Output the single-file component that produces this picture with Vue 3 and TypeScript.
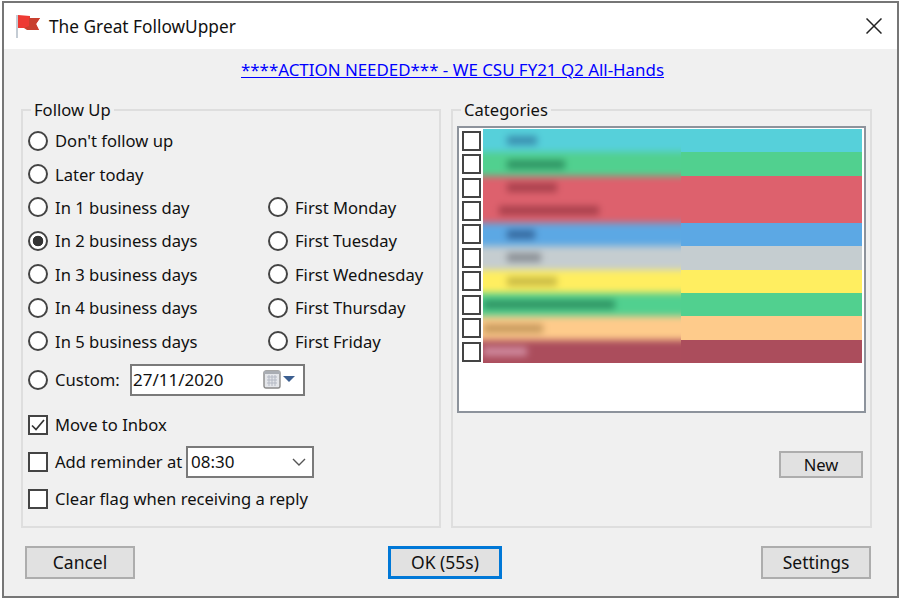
<script setup lang="ts">
interface Category {
  color: string;
  smudge: string;
  start: number;
  width: number;
}

const leftOptions = [
  "In 1 business day",
  "In 2 business days",
  "In 3 business days",
  "In 4 business days",
  "In 5 business days",
];
const rightOptions = [
  "First Monday",
  "First Tuesday",
  "First Wednesday",
  "First Thursday",
  "First Friday",
];
const selected = "In 2 business days";

// the names are blurred out in the screenshot, so only the smudges are kept
const categories: Category[] = [
  { color: "#56d0da", smudge: "#3a8fb0", start: 32, width: 30 },
  { color: "#51d08f", smudge: "#2f9463", start: 32, width: 58 },
  { color: "#dd616d", smudge: "#a8404c", start: 32, width: 50 },
  { color: "#dd616d", smudge: "#a8404c", start: 24, width: 100 },
  { color: "#5ca8e4", smudge: "#36699f", start: 32, width: 28 },
  { color: "#c5cdd0", smudge: "#8a8f95", start: 32, width: 34 },
  { color: "#ffee60", smudge: "#c9bb45", start: 32, width: 50 },
  { color: "#51d08f", smudge: "#2f9463", start: 8, width: 132 },
  { color: "#fecb8b", smudge: "#c79a5e", start: 8, width: 60 },
  { color: "#ab4d5c", smudge: "#cf8a9e", start: 8, width: 44 },
];
</script>

<template>
  <div class="page">
    <div class="window">
      <header class="titlebar">
        <svg class="flag" width="26" height="26" viewBox="0 0 26 26">
          <rect x="1" y="2" width="2" height="23" fill="#c4ccd4" />
          <path d="M3 2 L15 3 L15 5 L25 5 L21 11 L24 17 L12 17 L12 15 L3 15 Z" fill="#ee3a33" />
          <path d="M14 5 L25 5 L21 11 L24 17 L12 17 L9 15 L14 13 Z" fill="#c8402f" />
        </svg>
        <span class="title">The Great FollowUpper</span>
        <svg class="close" width="16" height="16" viewBox="0 0 16 16">
          <path d="M0.5 0.5 L15.5 15.5 M15.5 0.5 L0.5 15.5" stroke="#222" stroke-width="1.5" fill="none" />
        </svg>
      </header>

      <main class="body">
        <div class="link-row">
          <a class="mail-link" href="#">****ACTION NEEDED*** - WE CSU FY21 Q2 All-Hands</a>
        </div>

        <div class="panels">
          <fieldset class="group follow">
            <legend>Follow Up</legend>

            <div class="options">
              <label class="opt"><span class="radio"></span>Don't follow up</label>
              <span></span>
              <label class="opt"><span class="radio"></span>Later today</label>
              <span></span>
              <template v-for="(name, i) in leftOptions" :key="name">
                <label class="opt"><span class="radio" :class="{ on: name === selected }"></span>{{ name }}</label>
                <label class="opt"><span class="radio"></span>{{ rightOptions[i] }}</label>
              </template>
            </div>

            <div class="custom-row">
              <label class="opt custom-label"><span class="radio"></span>Custom:</label>
              <div class="field date">
                <span>27/11/2020</span>
                <svg width="32" height="20" viewBox="0 0 32 20">
                  <rect x="1" y="1" width="16" height="17" rx="2" fill="#e4e6ea" stroke="#8a8a8a" stroke-width="1.4" />
                  <rect x="1" y="1" width="16" height="3" fill="#a9adb3" />
                  <path d="M4 7h10M4 10h10M4 13h10M6 5v11M9 5v11M12 5v11" stroke="#b4b9c4" stroke-width="1" />
                  <path d="M20 6 H32 L26 12 Z" fill="#3c5f90" />
                </svg>
              </div>
            </div>

            <label class="opt check-row move"><span class="check">
              <svg width="16" height="16" viewBox="0 0 16 16">
                <path d="M2 8.5 L6 12.5 L14 3" stroke="#333" stroke-width="1.7" fill="none" />
              </svg>
            </span>Move to Inbox</label>

            <div class="reminder-row">
              <label class="opt reminder-label"><span class="check"></span>Add reminder at</label>
              <div class="field time">
                <span>08:30</span>
                <svg width="14" height="8" viewBox="0 0 14 8">
                  <path d="M1 1 L7 7 L13 1" stroke="#555" stroke-width="1.4" fill="none" />
                </svg>
              </div>
            </div>

            <label class="opt check-row clear"><span class="check"></span>Clear flag when receiving a reply</label>
          </fieldset>

          <fieldset class="group cats">
            <legend>Categories</legend>

            <div class="list">
              <div v-for="(cat, i) in categories" :key="i" class="cat-row">
                <span class="check small"></span>
                <span class="cat-color" :style="{ background: cat.color }"></span>
              </div>

              <div class="smear">
                <div class="smear-inner">
                  <div
                    v-for="(cat, i) in categories"
                    :key="i"
                    class="band"
                    :style="{ background: cat.color }"
                  >
                    <span
                      class="smudge"
                      :style="{ background: cat.smudge, marginLeft: cat.start + 'px', width: cat.width + 'px' }"
                    ></span>
                  </div>
                </div>
              </div>
            </div>

            <button class="btn new">New</button>
          </fieldset>
        </div>

        <footer class="actions">
          <button class="btn wide">Cancel</button>
          <button class="btn wide ok">OK (55s)</button>
          <button class="btn wide">Settings</button>
        </footer>
      </main>
    </div>
  </div>
</template>

<style>
html,
body {
  background: #fff;
}
</style>

<style scoped>
.page {
  width: 902px;
  height: 600px;
  padding: 1px 0 0 2px;
  box-sizing: border-box;
  overflow: hidden;
  font-family: "Noto Sans", "Open Sans", sans-serif;
  font-size: 16.6px;
  color: #111;
}

.window {
  width: 897px;
  height: 597px;
  box-sizing: border-box;
  border: 2px solid #767676;
  display: flex;
  flex-direction: column;
  background: #f0f0f0;
}

.titlebar {
  height: 46px;
  flex: none;
  background: #fff;
  display: flex;
  align-items: center;
  padding: 0 15px 0 11px;
  gap: 8px;
}

.flag {
  flex: none;
  margin-top: -1px;
}

.title {
  font-size: 17.3px;
  flex: 1;
}

.body {
  flex: 1;
  display: flex;
  flex-direction: column;
  padding: 0 25px 0 17px;
  min-height: 0;
}

.link-row {
  height: 49px;
  flex: none;
  display: flex;
  align-items: center;
  justify-content: center;
  padding-left: 12px;
  padding-bottom: 8px;
  box-sizing: border-box;
}

.mail-link {
  color: #0000ff;
  font-size: 16.9px;
  text-decoration: underline;
}

.panels {
  display: grid;
  grid-template-columns: 420px 421px;
  gap: 10px;
  height: 430px;
  flex: none;
}

.group {
  margin: 0;
  min-width: 0;
  border: 2px solid #dedede;
  display: flex;
  flex-direction: column;
  box-sizing: border-box;
  height: 430px;
  padding: 0 4px;
}

.group legend {
  margin-left: 4px;
  padding: 0 3px;
  line-height: 24px;
  font-size: 16.6px;
}

.follow {
  padding-left: 5px;
}

.follow legend {
  margin-left: 3px;
}

.options {
  display: grid;
  grid-template-columns: 240px 1fr;
  grid-auto-rows: 33.4px;
  padding-top: 2px;
}

.opt {
  display: flex;
  align-items: center;
  gap: 7px;
  white-space: nowrap;
}

.radio {
  width: 20px;
  height: 20px;
  flex: none;
  box-sizing: border-box;
  border: 2px solid #444;
  border-radius: 50%;
  background: #fff;
}

.radio.on {
  background: radial-gradient(circle, #333 0 5px, #fff 5.6px);
}

.check {
  width: 20px;
  height: 20px;
  flex: none;
  box-sizing: border-box;
  border: 2px solid #444;
  background: #fff;
  display: flex;
  align-items: center;
  justify-content: center;
}

.check.small {
  width: 19px;
  height: 20px;
}

.custom-row,
.reminder-row {
  display: flex;
  align-items: center;
}

.custom-row {
  height: 32px;
  margin-top: 6px;
}

.custom-label {
  width: 102px;
}

.reminder-label {
  width: 158px;
}

.field {
  box-sizing: border-box;
  border: 2px solid #7a7a7a;
  background: #fff;
  display: flex;
  align-items: center;
  justify-content: space-between;
}

.date {
  width: 175px;
  height: 32px;
  padding: 0 8px 0 1px;
  font-size: 17px;
}

.time {
  width: 128px;
  height: 32px;
  padding: 0 6px 0 3px;
  font-size: 17px;
}

.check-row {
  height: 30px;
}

.move {
  margin-top: 14px;
}

.reminder-row {
  height: 32px;
  margin-top: 6px;
}

.clear {
  margin-top: 6px;
}

.list {
  position: relative;
  width: 409px;
  height: 287px;
  box-sizing: border-box;
  border: 2px solid #8d939c;
  background: #fff;
  padding: 1px 2px 0 3px;
  flex: none;
  margin-top: 4px;
}

.cat-row {
  display: flex;
  height: 23.43px;
  align-items: stretch;
}

.cat-row .check {
  align-self: center;
}

.cat-color {
  flex: 1;
  margin-left: 2px;
}

.smear {
  position: absolute;
  left: 24px;
  top: 1px;
  width: 198px;
  height: 234.3px;
  overflow: hidden;
}

.smear-inner {
  margin: -8px -8px 0;
  padding: 8px 0;
  filter: blur(3.5px);
}

.band {
  height: 23.43px;
  display: flex;
  align-items: center;
}

.band:first-child {
  box-shadow: 0 -10px 0 #56d0da;
}

.band:last-child {
  box-shadow: 0 10px 0 #ab4d5c;
}

.smudge {
  height: 9px;
  display: block;
}

.btn {
  font: inherit;
  color: inherit;
  background: #e1e1e1;
  border: 2px solid #adadad;
  box-sizing: border-box;
  padding: 0 0 2px;
}

.new {
  width: 84px;
  height: 27px;
  align-self: flex-end;
  margin: 38px 3px 0 0;
}

.actions {
  display: flex;
  justify-content: space-between;
  margin-top: 18px;
  padding: 0 1px 0 4px;
}

.wide {
  width: 110px;
  height: 33px;
  font-size: 17.5px;
}

.ok {
  width: 114px;
  border: 3px solid #0078d7;
  margin-right: 6px;
}
</style>
